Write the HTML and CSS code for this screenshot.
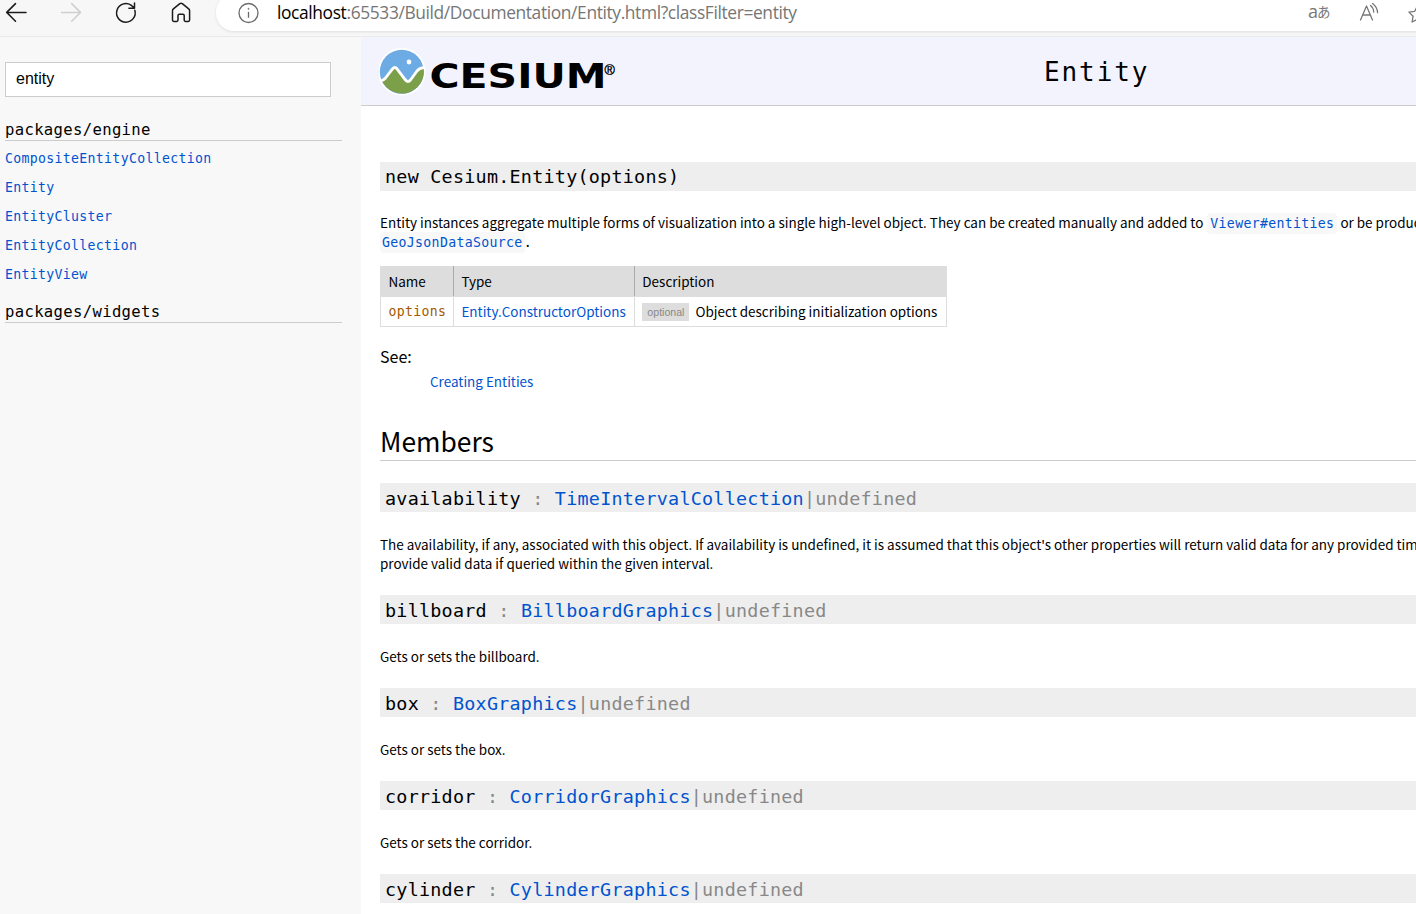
FILE: index.html
```html
<!DOCTYPE html>
<html lang="en">
<head>
<meta charset="utf-8">
<title>Entity - Cesium Documentation</title>
<link rel="stylesheet" href="styles.css">
</head>
<body>
<div class="browser">
  <svg class="nav-icons" width="216" height="36" viewBox="0 0 216 36" fill="none" stroke="#1b1b1b" stroke-width="1.5" stroke-linecap="round" stroke-linejoin="round">
    <path d="M26 12.4H6.7M15.5 3.6L6.7 12.4l8.8 8.8"/>
    <path stroke="#cfcfcf" d="M61.5 12.4H80.500M71.700 3.600l8.800 8.800-8.800 8.800"/>
    <path d="M134.800 10.200A9.300 9.300 0 1 1 131 5.100L134.300 8M134.500 3v5.200h-5.600"/>
    <path d="M172.500 10.700c0-.8.300-1.300.9-1.800l6.400-5.200c.8-.6 1.700-.6 2.500 0l6.400 5.200c.6.500.9 1 .9 1.800v9.400c0 .8-.5 1.300-1.300 1.300h-2.800c-.8 0-1.300-.5-1.300-1.300v-4.600c0-.8-.5-1.300-1.300-1.300h-3.600c-.8 0-1.300.5-1.300 1.300v4.600c0 .8-.5 1.300-1.300 1.300h-2.900c-.8 0-1.300-.5-1.300-1.300z"/>
  </svg>
  <div class="address">
    <svg class="info" width="22" height="22" viewBox="0 0 22 22" fill="none" stroke="#6b6b6b" stroke-width="1.300"><circle cx="11.500" cy="11" r="9.500"/><path d="M11.500 9.800v6"/><circle cx="11.500" cy="6.800" r=".6" fill="#6b6b6b" stroke-width=".6"/></svg>
    <span class="url"><span class="host">localhost</span>:65533/Build/Documentation/Entity.html?classFilter=entity</span>
    <span class="translate">a<span class="kana">あ</span></span>
    <svg class="tools" width="60" height="26" viewBox="0 0 60 26" fill="none" stroke="#777" stroke-width="1.300" stroke-linecap="round" stroke-linejoin="round">
      <path d="M4.500 20L10.500 6l6 14M6.600 15h7.800M14.500 5.500q3 2.200 3.200 6.500M16.600 3.600q4.600 3.500 5 9"/>
      <path d="M61.300 6l-2.600 5.300-5.800.8 4.200 4.100-1 5.800 5.200-2.700"/>
    </svg>
  </div>
</div>
<div class="page">
  <aside class="sidebar">
    <input class="filter" type="text" value="entity" aria-label="Filter">
    <h5 class="package">packages/engine</h5>
    <ul class="classes">
      <li><a>CompositeEntityCollection</a></li>
      <li><a>Entity</a></li>
      <li><a>EntityCluster</a></li>
      <li><a>EntityCollection</a></li>
      <li><a>EntityView</a></li>
    </ul>
    <h5 class="package">packages/widgets</h5>
  </aside>
  <main class="main">
    <header class="banner">
      <svg class="logo" width="240" height="50" viewBox="0 0 240 50">
        <circle cx="22.800" cy="24.800" r="23.800" fill="#fff"/>
        <circle cx="22.800" cy="24.800" r="22" fill="#6dabe4"/>
        <path fill="#7c9f4a" d="M3 34l4-2.500 7.500-9.500q1.500-1.500 3 0l9.500 12q2 2 4 0l7.500-10q1.500-2 4-2l2.200 0A22 22 0 0 1 3 34z"/>
        <path fill="none" stroke="#fff" stroke-width="2.800" stroke-linejoin="round" d="M1.500 34q3-.6 5-3l7-9.200q2.200-2.600 4.500 0l8.700 11.500q2.300 2.600 4.600 0l6.700-9.300q2.500-3 7.500-3.300"/>
        <circle cx="30" cy="15" r="2.400" fill="#fff"/>
        <text class="wordmark" x="50.500" y="41" textLength="177" lengthAdjust="spacingAndGlyphs">CESIUM</text>
        <text class="reg" x="225.500" y="28">®</text>
      </svg>
      <h1 class="page-title">Entity</h1>
    </header>
    <div class="content">
      <h4 class="sig first">new Cesium.Entity(options)</h4>
      <p class="desc intro">Entity instances aggregate multiple forms of visualization into a single high-level object. They can be created manually and added to <code class="inline"><a>Viewer#entities</a></code> or be produc<br><code><a>GeoJsonDataSource</a></code><span class="dot">.</span></p>
      <table class="params">
        <thead><tr><th>Name</th><th>Type</th><th>Description</th></tr></thead>
        <tbody><tr><td class="name">options</td><td><a>Entity.ConstructorOptions</a></td><td><span class="optional">optional</span>Object describing initialization options</td></tr></tbody>
      </table>
      <h5 class="see">See:</h5>
      <p class="see-link"><a>Creating Entities</a></p>
      <h3 class="section">Members</h3>
      <h4 class="sig">availability<span class="type"> : <a>TimeIntervalCollection</a>|undefined</span></h4>
      <p class="desc">The availability, if any, associated with this object. If availability is undefined, it is assumed that this object's other properties will return valid data for any provided tim<br>provide valid data if queried within the given interval.</p>
      <h4 class="sig">billboard<span class="type"> : <a>BillboardGraphics</a>|undefined</span></h4>
      <p class="desc">Gets or sets the billboard.</p>
      <h4 class="sig">box<span class="type"> : <a>BoxGraphics</a>|undefined</span></h4>
      <p class="desc">Gets or sets the box.</p>
      <h4 class="sig">corridor<span class="type"> : <a>CorridorGraphics</a>|undefined</span></h4>
      <p class="desc">Gets or sets the corridor.</p>
      <h4 class="sig">cylinder<span class="type"> : <a>CylinderGraphics</a>|undefined</span></h4>
    </div>
  </main>
</div>
</body>
</html>
```
FILE: styles.css
```css
* { box-sizing: border-box; }
body {
  margin: 0;
  width: 1416px;
  height: 914px;
  overflow: hidden;
  background: #fff;
  color: #000;
  font: 13.48px/19px "Noto Sans CJK SC", sans-serif;
}
h1, h3, h4, h5, p, ul { margin: 0; padding: 0; font-weight: 400; }
a { color: #0053cf; }

.browser {
  display: flex;
  height: 37px;
  background: #f7f7f7;
  border-bottom: 1px solid #eaeaea;
}
.nav-icons { flex: none; }
.address {
  display: flex;
  flex: none;
  width: 1240px;
  height: 37px;
  margin-top: -6px;
  padding: 2px 0 0 21px;
  background: #fff;
  border-radius: 18px;
  box-shadow: 0 1px 3px rgba(0, 0, 0, .1);
}
.info { margin-top: 6px; }
.url {
  width: 1028px;
  margin-left: 18px;
  font: 17.4px/33px "Open Sans", sans-serif;
  letter-spacing: -.38px;
  color: #767676;
  white-space: nowrap;
}
.host { color: #000; }
.translate {
  width: 48px;
  margin-left: 3px;
  font: 18px/31px "Open Sans", sans-serif;
  letter-spacing: -1px;
  color: #777;
  white-space: nowrap;
}
.kana { font: 13.5px/20px "Noto Sans CJK JP", sans-serif; vertical-align: 1px; }
.tools { margin-top: 4px; }

.page { display: flex; height: 877px; overflow: hidden; }
.sidebar {
  flex: none;
  width: 361px;
  padding: 25px 19px 0 5px;
  background: #f8f8f8;
}
.filter {
  display: block;
  width: 326px;
  height: 35px;
  margin-bottom: 22px;
  padding: 0 10px 2px;
  border: 1px solid #ccc;
  background: #fff;
  font: 16px "Liberation Sans", sans-serif;
  color: #000;
}
.package {
  height: 22px;
  border-bottom: 1px solid #ccc;
  font: 15.6px/22px "DejaVu Sans Mono", monospace;
  letter-spacing: .33px;
}
.classes {
  height: 160px;
  padding-top: 4px;
  list-style: none;
  font: 13.2px/28.9px "DejaVu Sans Mono", monospace;
  letter-spacing: .32px;
}
.main { flex: none; width: 1055px; overflow: hidden; }
.banner {
  display: flex;
  height: 69px;
  padding-left: 18px;
  background: #f3f3fe;
  border-bottom: 1px solid #ccc;
}
.logo { margin-top: 10px; }
.wordmark { font: bold 34px "DejaVu Sans", sans-serif; }
.reg { font: 14px "Liberation Sans", sans-serif; stroke: #000; stroke-width: .4px; }
.page-title {
  margin-left: 425px;
  font: 26px/71px "DejaVu Sans Mono", monospace;
  letter-spacing: 1.9px;
}
.content { width: 1200px; padding: 56px 0 0 19px; }
.sig {
  height: 29px;
  padding-left: 5px;
  background: #eee;
  font: 18.4px/31px "DejaVu Sans Mono", monospace;
  letter-spacing: .25px;
}
.first { line-height: 29px; }
.type { color: #888; }
.desc { padding: 23px 0 22px; white-space: nowrap; }
.intro { padding: 22px 0 15px; }
code {
  padding: 3px 2px;
  border-radius: 4px;
  background: #f8f8f8;
  font: 13.2px "DejaVu Sans Mono", monospace;
  letter-spacing: .33px;
}
.inline { margin-left: 1px; padding: 3px; }
.dot { font: 14px "DejaVu Sans Mono", monospace; margin-left: -1px; }
.params { width: 567px; border-collapse: collapse; table-layout: auto; }
.params th, .params td {
  height: 30px;
  padding: 0 7.5px;
  border: 1px solid #ddd;
  text-align: left;
  font-weight: 400;
  white-space: nowrap;
}
.params th { background: #ddd; border-right-color: #aaa; }
.params th:last-child { border-right-color: #ddd; }
.params .name {
  padding-right: 6.5px;
  font: 13.2px "DejaVu Sans Mono", monospace;
  letter-spacing: .3px;
  color: #a35a00;
}
.optional {
  display: inline-block;
  margin-right: 6px;
  padding: 0 5px;
  background: #ddd;
  font: 10.6px/18px "Liberation Sans", sans-serif;
  color: #888;
  vertical-align: 1px;
}
.see { margin-top: 18px; font-size: 16px; line-height: 22px; }
.see-link { margin: 5px 0 0 50px; }
.section {
  height: 43px;
  margin: 27px 0 22px;
  border-bottom: 1px solid #ccc;
  font-size: 26.4px;
  line-height: 46px;
}
```
